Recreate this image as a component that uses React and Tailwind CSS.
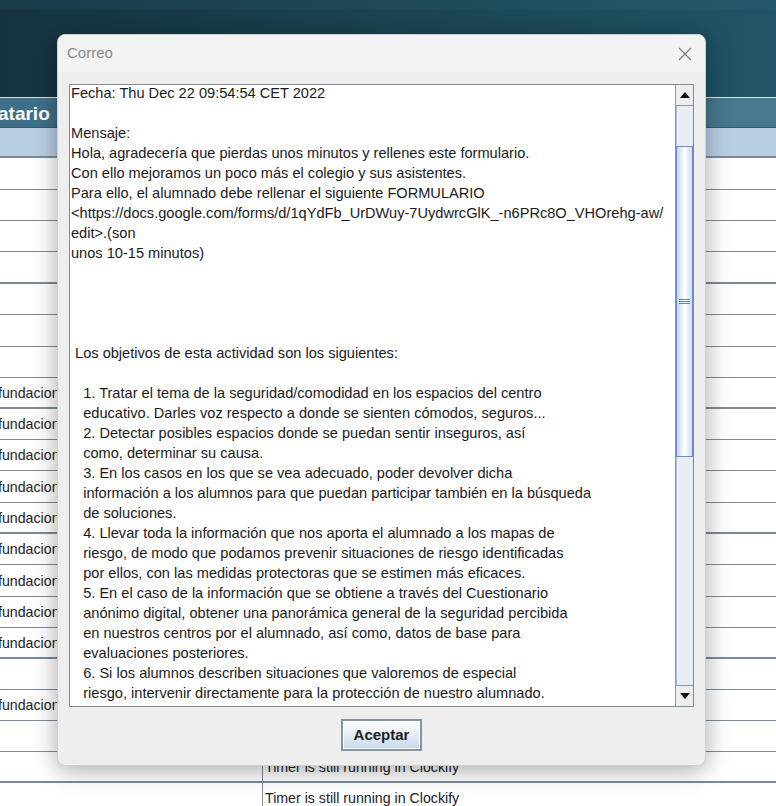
import React from "react";

const font = { fontFamily: '"Liberation Sans", Arial, sans-serif' };

const bodyLines = [
  "Fecha: Thu Dec 22 09:54:54 CET 2022",
  "",
  "Mensaje:",
  "Hola, agradecería que pierdas unos minutos y rellenes este formulario.",
  "Con ello mejoramos un poco más el colegio y sus asistentes.",
  "Para ello, el alumnado debe rellenar el siguiente FORMULARIO",
  "<https://docs.google.com/forms/d/1qYdFb_UrDWuy-7UydwrcGlK_-n6PRc8O_VHOrehg-aw/",
  "edit>.(son",
  "unos 10-15 minutos)",
  "",
  "",
  "",
  "",
  " Los objetivos de esta actividad son los siguientes:",
  "",
  "   1. Tratar el tema de la seguridad/comodidad en los espacios del centro",
  "   educativo. Darles voz respecto a donde se sienten cómodos, seguros...",
  "   2. Detectar posibles espacios donde se puedan sentir inseguros, así",
  "   como, determinar su causa.",
  "   3. En los casos en los que se vea adecuado, poder devolver dicha",
  "   información a los alumnos para que puedan participar también en la búsqueda",
  "   de soluciones.",
  "   4. Llevar toda la información que nos aporta el alumnado a los mapas de",
  "   riesgo, de modo que podamos prevenir situaciones de riesgo identificadas",
  "   por ellos, con las medidas protectoras que se estimen más eficaces.",
  "   5. En el caso de la información que se obtiene a través del Cuestionario",
  "   anónimo digital, obtener una panorámica general de la seguridad percibida",
  "   en nuestros centros por el alumnado, así como, datos de base para",
  "   evaluaciones posteriores.",
  "   6. Si los alumnos describen situaciones que valoremos de especial",
  "   riesgo, intervenir directamente para la protección de nuestro alumnado.",
  "",
];

// background table rows: [height, thick bottom line, left text, right text]
const rows = [
  [32, false, "", ""],
  [31, false, "", ""],
  [31, false, "", ""],
  [32, true, "", ""],
  [31, false, "", ""],
  [32, false, "", ""],
  [31, false, "", ""],
  [31, true, "fundacion", ""],
  [31, false, "fundacion", ""],
  [31, false, "fundacion", ""],
  [32, false, "fundacion", ""],
  [31, true, "fundacion", ""],
  [31, false, "fundacion", ""],
  [32, false, "fundacion", ""],
  [31, false, "fundacion", ""],
  [31, true, "fundacion", ""],
  [31, false, "", ""],
  [31, false, "fundacion", ""],
  [31, false, "", ""],
  [31, true, "", "Timer is still running in Clockify"],
  [31, false, "", "Timer is still running in Clockify"],
];

function ArrowButton({ down }) {
  return (
    <div className="h-[20px] flex items-center justify-center bg-[#eeeeee]">
      <svg width="10" height="6" viewBox="0 0 10 6">
        {down ? <path d="M0 0h10L5 6z" fill="#111" /> : <path d="M0 6h10L5 0z" fill="#111" />}
      </svg>
    </div>
  );
}

export default function App() {
  return (
    <div className="relative w-[776px] h-[806px] overflow-hidden bg-white" style={font}>
      {/* app behind the dialog */}
      <div className="flex flex-col">
        <div className="h-[97px] bg-gradient-to-r from-[#163240] via-[#1b4452] to-[#1f5566] flex flex-col">
          <div className="h-[10px] bg-gradient-to-r from-[#1a3a48] to-[#22596a]" />
        </div>
        <div className="h-px bg-[#d8e4ea]" />
        <div className="h-[30px] bg-gradient-to-r from-[#3f6f88] to-[#47798f] border-b border-[#36596c] flex items-center pt-[2px]">
          <span className="text-white font-bold text-[19px] leading-none ml-[-2px]">atario</span>
        </div>
        <div className="h-[30px] bg-[#b9cfe4] border-b-2 border-[#7c8a98]" />
        {rows.map(([h, thick, left, right], i) => (
          <div
            key={i}
            className={`flex shrink-0 ${thick ? "border-b-2" : "border-b"} border-[#7c8a98] bg-white`}
            style={{ height: h }}
          >
            <div className="w-[262px] overflow-hidden whitespace-nowrap flex items-center text-[14.2px] text-[#222] pt-[2px]">
              <span className="ml-[-2px]">{left}</span>
            </div>
            <div className="flex-1 border-l border-[#7c8a98] flex items-center pl-[2px] pt-[2px] text-[14.2px] text-[#222]">
              {right}
            </div>
          </div>
        ))}
      </div>

      {/* modal dialog */}
      <div className="absolute left-[57px] top-[34px] w-[649px] h-[732px] rounded-lg bg-[#eeeeee] border border-[#cfcfcf] shadow-[0_4px_24px_rgba(0,0,0,0.35)] flex flex-col overflow-hidden">
        <div className="h-[37px] shrink-0 bg-[#f3f3f3] flex items-center justify-between pl-[9px] pr-[13px]">
          <span className="text-[15px] text-[#8a8a8a]">Correo</span>
          <svg width="14" height="14" viewBox="0 0 14 14">
            <path d="M1 1l12 12M13 1L1 13" stroke="#7a7a7a" strokeWidth="1.1" />
          </svg>
        </div>
        <div className="flex-1 flex flex-col px-[11px] pt-[12px] pb-[14px]">
          <div className="h-[623px] flex border border-[#7f8b98] bg-white">
            <div className="flex-1 overflow-hidden pl-[1px]">
              <div className="text-[14.6px] leading-[20px] text-[#1a1a1a] whitespace-pre mt-[-2px]">
                {bodyLines.map((l, i) => (
                  <div key={i} className="h-[20px]">{l}</div>
                ))}
              </div>
            </div>
            <div className="w-[18px] flex flex-col border-l border-[#8a99a8]">
              <ArrowButton />
              <div className="flex-1 flex flex-col bg-[#e9edf3] border-t border-[#8a99a8]">
                <div className="h-[40px] border-l border-[#aebfd9]" />
                <div className="h-[311px] border border-[#6d8bc6] bg-gradient-to-r from-[#c3d4ec] via-white to-[#cfdcef] flex items-center justify-center">
                  <div className="flex flex-col gap-[1px]">
                    <div className="w-[11px] h-px bg-[#6382bf]" />
                    <div className="w-[11px] h-px bg-[#6382bf]" />
                    <div className="w-[11px] h-px bg-[#6382bf]" />
                  </div>
                </div>
                <div className="flex-1 border-l border-[#aebfd9]" />
              </div>
              <div className="border-t border-[#8a99a8]">
                <ArrowButton down />
              </div>
            </div>
          </div>
          <div className="flex-1 flex items-end justify-center">
            <button className="w-[81px] h-[32px] border-2 border-[#8594a4] bg-gradient-to-b from-white to-[#c9d9ea] text-[15px] font-bold text-[#222] shadow-[inset_0_0_0_1px_#ffffff]">
              Aceptar
            </button>
          </div>
        </div>
      </div>
    </div>
  );
}
